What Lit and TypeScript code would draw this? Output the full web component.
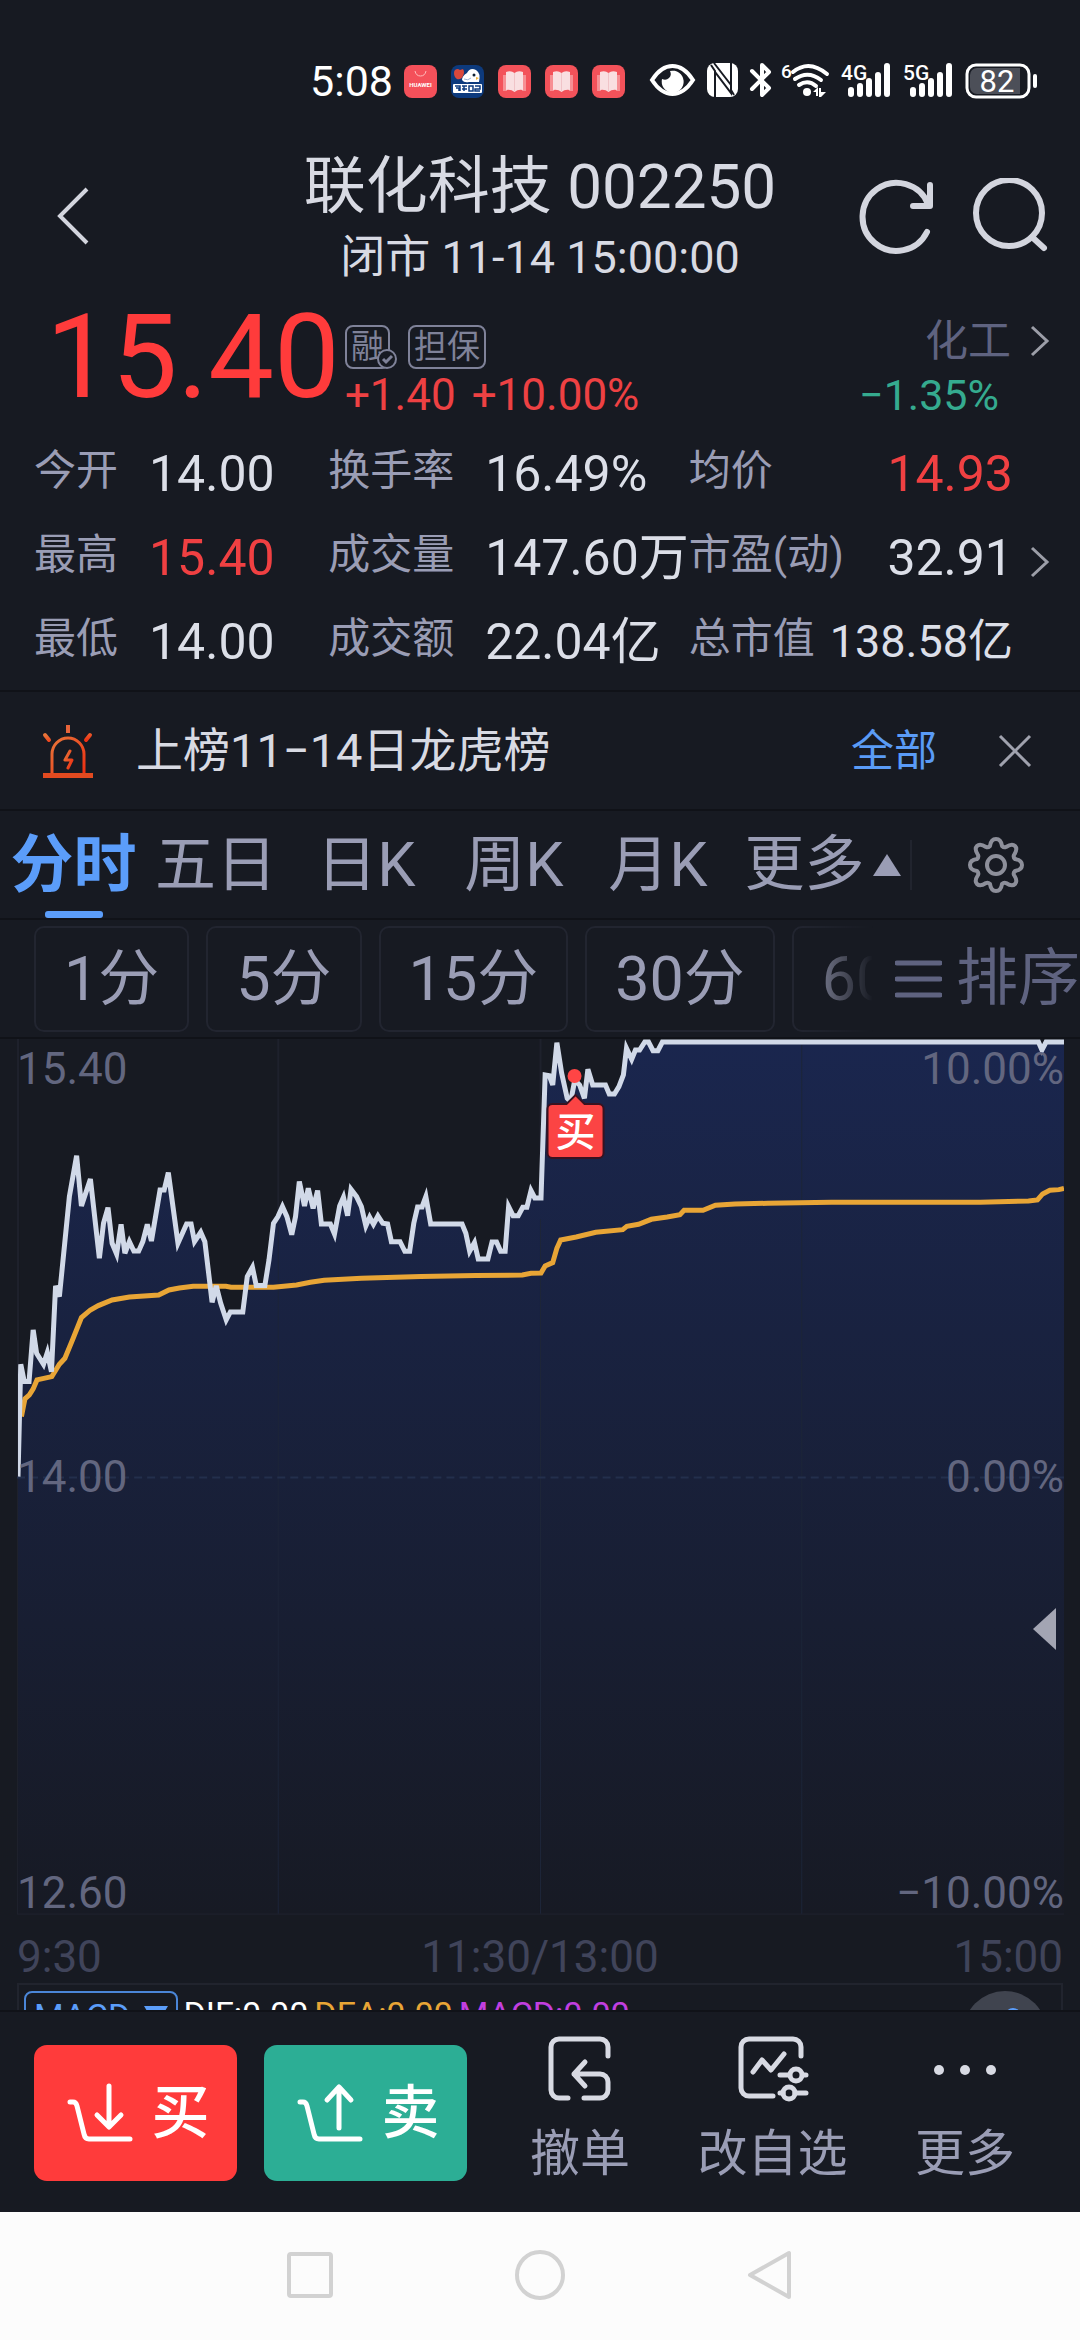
import { LitElement, html, css } from "lit";
import { customElement, state } from "lit/decorators.js";

interface Stat {
  label: string;
  value: string;
  tone?: "up" | "small";
}

const STATS: Stat[] = [
  { label: "今开", value: "14.00" },
  { label: "换手率", value: "16.49%" },
  { label: "均价", value: "14.93", tone: "up" },
  { label: "最高", value: "15.40", tone: "up" },
  { label: "成交量", value: "147.60万" },
  { label: "市盈(动)", value: "32.91" },
  { label: "最低", value: "14.00" },
  { label: "成交额", value: "22.04亿" },
  { label: "总市值", value: "138.58亿", tone: "small" },
];

const PERIODS = ["分时", "五日", "日K", "周K", "月K"];
const MINUTES = ["1分", "5分", "15分", "30分", "60分"];

/* Session samples: x grows with trading time, y falls with price (93 units = 0.10). */
const PRICE =
  "52,1340 60,1003 70,1055 84,1055 96,900 106,970 126,1003 137,968 149,1025 161,768 172,800 201,500 222,377 236,528 262,447 288,685 300,580 313,533 325,640 338,672 351,583 362,670 375,635 388,663 402,663 414,635 427,583 439,633 464,480 476,480 488,428 516,640 541,582 554,582 564,635 582,607 594,635 615,817 627,768 640,820 656,870 668,846 704,846 717,740 732,712 743,767 768,767 780,690 793,580 806,560 819,530 832,560 846,614 857,560 868,455 883,528 894,475 908,535 921,482 932,582 958,582 970,612 985,528 996,502 1008,557 1018,478 1034,500 1048,530 1061,588 1072,562 1083,583 1096,558 1110,580 1124,582 1135,635 1160,635 1174,664 1188,664 1200,580 1211,531 1224,531 1235,500 1249,582 1340,582 1351,610 1362,664 1376,638 1387,687 1415,687 1427,636 1440,636 1452,664 1465,664 1475,530 1488,557 1503,557 1516,532 1528,532 1540,482 1551,504 1569,504 1581,135 1593,137 1603,165 1615,38 1629,130 1645,205 1655,215 1667,150 1681,165 1695,205 1705,118 1719,165 1756,165 1767,192 1782,192 1795,170 1808,135 1817,55 1832,88 1843,60 1855,60 1870,36 1881,36 1894,62 1908,62 1921,36 3012,36 3022,60 3034,36 3086,36";
const AVERAGE =
  "62,1160 72,1107 85,1095 96,1077 107,1050 150,1040 172,1003 188,985 212,925 236,863 262,840 285,827 325,810 375,801 460,795 490,780 520,774 560,769 655,769 670,772 793,772 860,765 900,757 940,751 1048,745 1220,740 1380,737 1515,735 1540,730 1569,729 1581,708 1603,698 1615,655 1626,630 1671,621 1728,607 1806,599 1818,589 1852,583 1889,568 1935,561 1972,554 1984,541 2039,541 2075,526 2132,522 2226,520 2412,517 2843,517 2983,513 3009,510 3024,492 3045,481 3071,479 3086,475";

const fontStack = css`"Roboto", "Noto Sans CJK SC", sans-serif`;

const reset = css`
  * {
    box-sizing: border-box;
  }
  button {
    font: inherit;
    color: inherit;
    background: none;
    border: 0;
    padding: 0;
    margin: 0;
    cursor: pointer;
    white-space: nowrap;
  }
  svg {
    display: block;
    flex: none;
  }
`;

@customElement("status-bar")
class StatusBar extends LitElement {
  static styles = [
    reset,
    css`
      :host {
        display: block;
        color: #fff;
      }
      svg {
        overflow: visible;
      }
      .bar {
        display: flex;
        align-items: center;
        justify-content: flex-end;
        height: 108px;
        padding: 54px 42px 0 0;
      }
      .time {
        font-size: 43px;
        line-height: 54px;
        margin-right: 11px;
      }
      .apps {
        display: flex;
        gap: 14px;
        margin-right: 25px;
      }
      .system {
        display: flex;
        gap: 12px;
      }
      .wifi {
        margin-left: -3px;
      }
    `,
  ];

  private book() {
    return html`<svg width="33" height="33" viewBox="0 0 33 33">
      <rect width="33" height="33" rx="8" fill="#f3525a" />
      <path d="M5 10h4v16H5zM24 10h4v16h-4z" fill="#f78f94" />
      <path d="M8 7q5-2 8.500 1q3.500-3 8.500-1v18q-5-1-8.500 2q-3.500-3-8.500-2z" fill="#f9dfe1" />
      <path d="M16.500 8v18" stroke="#f0c4c8" />
    </svg>`;
  }

  private signal(label: string) {
    return html`<svg width="50" height="34" viewBox="0 0 50 34">
      <text x="0" y="17" font-size="21" font-weight="500" fill="#fff">${label}</text>
      <path
        d="M10 27v4M19 23v8M28 18v13M37 12v19M46 3v28"
        stroke="#fff"
        stroke-width="6"
        stroke-linecap="round"
      />
    </svg>`;
  }

  render() {
    return html`<div class="bar">
      <span class="time">5:08</span>
      <span class="apps">
        <svg width="33" height="33" viewBox="0 0 33 33">
          <rect width="33" height="33" rx="8" fill="#f4505a" />
          <path d="M11 6q1 5 5.500 5T22 6" fill="none" stroke="#fbb" />
          <text x="16.500" y="22" font-size="6" font-weight="700" fill="#fff" text-anchor="middle">HUAWEI</text>
        </svg>
        <svg width="33" height="33" viewBox="0 0 33 33">
          <rect width="33" height="33" rx="8" fill="#0d3a7d" />
          <path d="M11 15q0-4 5-7q3-6 9-3q5 3 3 12H18q-5 1-7-2z" fill="#fff" />
          <path d="M13 14q4 2 7-1" fill="none" stroke="#9fb6d6" />
          <path d="M3 8q0-4 4-4l2 1 3-1q2 3 0 7-2 4-6 3-3-2-3-6z" fill="#d9483c" />
          <circle cx="23" cy="10" r="1.500" fill="#123" />
          <path d="M25 12l3 1-3 2z" fill="#f3b53a" />
          <rect x="2" y="19" width="29" height="9" rx="1" fill="#fff" />
          <path
            d="M4 21h5v5M5 23h3v3M11 21h5M13 21v5M11 24h5M18 21h4v5h-4zM24 21h5v3h-5v2h5"
            fill="none"
            stroke="#0d3a7d"
            stroke-width="1.500"
          />
        </svg>
        ${this.book()} ${this.book()} ${this.book()}
      </span>
      <span class="system">
        <svg width="45" height="34" viewBox="0 0 45 34">
          <path d="M2 17Q11 3 22.500 3T43 17Q34 31 22.500 31T2 17z" fill="none" stroke="#fff" stroke-width="4" />
          <path d="M20 8a11 11 0 1 1-8 8q4 2 7-1t1-7z" fill="#fff" />
        </svg>
        <svg width="31" height="34" viewBox="0 0 31 34">
          <rect width="31" height="34" rx="8" fill="#fff" />
          <path d="M8 34V9l16 21V6M7 0l17 22" fill="none" stroke="#171a22" stroke-width="2" />
          <path d="M4 2l4 6v26M27 32l-3-5V0" fill="none" stroke="#171a22" stroke-width="2" />
        </svg>
        <svg width="22" height="34" viewBox="0 0 22 34">
          <path d="M2 8l17 17-7 7V2l7 7L2 26" fill="none" stroke="#fff" stroke-width="4" stroke-linejoin="round" stroke-linecap="round" />
        </svg>
        <svg class="wifi" width="48" height="34" viewBox="0 0 48 34">
          <text x="0" y="15" font-size="19" font-weight="500" fill="#fff">6</text>
          <path d="M12 9q16-13 34 2M14 16q13-9 26 1M18 22q9-6 17 1" fill="none" stroke="#fff" stroke-width="4" stroke-linecap="round" />
          <circle cx="26" cy="29" r="4" fill="#fff" />
          <path d="M32 29l5-5v9h-2v-4zM38 25h2v4h5l-5 5h-2z" fill="#fff" />
        </svg>
        ${this.signal("4G")} ${this.signal("5G")}
        <svg width="73" height="36" viewBox="0 0 73 36">
          <rect x="2" y="2" width="62" height="32" rx="9" fill="none" stroke="#fff" stroke-width="3" />
          <path d="M12 5h43v26H12a7 7 0 0 1-7-7V12a7 7 0 0 1 7-7z" fill="#4c4f58" />
          <path d="M70 13v10" stroke="#fff" stroke-width="4" stroke-linecap="round" />
          <text x="32" y="29" font-size="31" fill="#fff" text-anchor="middle">82</text>
        </svg>
      </span>
    </div>`;
  }
}

@customElement("quote-panel")
class QuotePanel extends LitElement {
  static styles = [
    reset,
    css`
      :host {
        display: block;
        border-bottom: 2px solid #101218;
      }
      .head {
        display: grid;
        grid-template-columns: 1fr auto 1fr;
        align-items: center;
        padding: 43px 32px 0;
      }
      .back {
        justify-self: start;
        padding: 0 0 5px 24px;
      }
      .title {
        margin: 0;
        text-align: center;
        color: #d8dae3;
        font-weight: 400;
      }
      .name {
        display: block;
        font-size: 62px;
        line-height: 72px;
      }
      .session {
        display: block;
        margin-top: 7px;
        font-size: 45px;
        line-height: 56px;
      }
      .actions {
        display: flex;
        justify-content: flex-end;
        gap: 38px;
        padding-bottom: 5px;
      }
      .quote {
        display: flex;
        align-items: flex-start;
        padding: 12px 30px 0 46px;
      }
      .price {
        font-size: 117px;
        line-height: 118px;
        color: #ff3b3b;
      }
      .info {
        margin-left: 5px;
        padding-top: 27px;
      }
      .tags {
        display: flex;
        gap: 18px;
        color: #7f8299;
      }
      .tag {
        position: relative;
        height: 44px;
        min-width: 44px;
        padding: 0 4px;
        border: 2px solid #7f8299;
        border-radius: 8px;
        font-size: 33px;
        line-height: 40px;
      }
      .check {
        position: absolute;
        right: -10px;
        bottom: -3px;
      }
      .change {
        display: flex;
        gap: 16px;
        font-size: 44px;
        line-height: 52px;
        color: #ee4143;
      }
      .sector {
        display: grid;
        grid-template-columns: auto auto;
        align-items: center;
        justify-items: end;
        column-gap: 19px;
        margin-left: auto;
        padding-top: 16px;
        font-size: 43px;
        line-height: 54px;
        color: #5f6380;
      }
      .down {
        padding-right: 12px;
        font-size: 43px;
        line-height: 54px;
        color: #35ab8f;
      }
      .stats {
        display: grid;
        grid-template-columns: 294fr 358fr 324fr 37fr;
        margin: 0;
        padding: 10px 30px 6px 34px;
      }
      .stat {
        display: flex;
        align-items: flex-start;
        height: 84px;
        padding-top: 11px;
        white-space: nowrap;
      }
      .stat dt {
        width: 115px;
        font-size: 42px;
        line-height: 56px;
        color: #9a9db5;
      }
      .stat dd {
        margin: 0;
        font-size: 50px;
        line-height: 62px;
        color: #dcdfe8;
      }
      .stat:nth-of-type(3n + 2) dt {
        width: 157px;
      }
      .stat:nth-of-type(3n) {
        justify-content: space-between;
      }
      .stat:nth-of-type(3n) dt {
        width: auto;
      }
      .stat:nth-of-type(3n + 1) {
        grid-column: 1;
      }
      .stat dd.up {
        color: #f04042;
      }
      .stat dd.small {
        font-size: 45px;
      }
      .more {
        grid-column: 4;
        grid-row: 2;
        display: flex;
        align-items: center;
        justify-content: flex-end;
        height: 84px;
        padding-top: 8px;
      }
    `,
  ];

  private arrow() {
    return html`<svg width="20" height="32" viewBox="0 0 20 32">
      <path d="M2 2l15 14L2 30" fill="none" stroke="#9c9ea8" stroke-width="3" />
    </svg>`;
  }

  render() {
    return html`
      <header class="head">
        <button class="back" aria-label="返回">
          <svg width="34" height="58" viewBox="0 0 34 58">
            <path d="M31 2L4 29l27 27" fill="none" stroke="#d3d5de" stroke-width="4" />
          </svg>
        </button>
        <h1 class="title">
          <span class="name">联化科技 002250</span>
          <span class="session">闭市 11-14 15:00:00</span>
        </h1>
        <div class="actions">
          <button aria-label="刷新">
            <svg width="76" height="76" viewBox="0 0 76 76">
              <path d="M69 54A34 34 0 1 1 70 26" fill="none" stroke="#d3d5de" stroke-width="6" stroke-linecap="round" />
              <path d="M72 7v21H55" fill="none" stroke="#d3d5de" stroke-width="6" stroke-linejoin="round" stroke-linecap="round" />
            </svg>
          </button>
          <button aria-label="搜索">
            <svg width="76" height="76" viewBox="0 0 76 76">
              <circle cx="37" cy="35" r="33" fill="none" stroke="#d3d5de" stroke-width="6" />
              <path d="M60 59l12 11" stroke="#d3d5de" stroke-width="6" stroke-linecap="round" />
            </svg>
          </button>
        </div>
      </header>
      <div class="quote">
        <div class="price">15.40</div>
        <div class="info">
          <div class="tags">
            <span class="tag"
              >融<svg class="check" width="22" height="22" viewBox="0 0 22 22">
                <circle cx="11" cy="11" r="9" fill="#171a22" stroke="#7f8299" stroke-width="2" />
                <path d="M7 11l3 3 6-6" fill="none" stroke="#7f8299" stroke-width="3" /></svg
            ></span>
            <span class="tag">担保</span>
          </div>
          <div class="change"><span>+1.40</span><span>+10.00%</span></div>
        </div>
        <div class="sector">
          <span>化工</span>
          <button aria-label="行业">${this.arrow()}</button>
          <span class="down">−1.35%</span>
        </div>
      </div>
      <dl class="stats">
        ${STATS.map(
          (s) => html`<div class="stat">
            <dt>${s.label}</dt>
            <dd class=${s.tone ?? ""}>${s.value}</dd>
          </div>`
        )}
        <button class="more" aria-label="更多指标">${this.arrow()}</button>
      </dl>
    `;
  }
}

@customElement("notice-bar")
class NoticeBar extends LitElement {
  static styles = [
    reset,
    css`
      :host {
        display: block;
        border-bottom: 2px solid #101218;
      }
      .bar {
        display: flex;
        align-items: center;
        height: 117px;
        padding: 0 47px 0 40px;
        line-height: 60px;
      }
      .text {
        margin-left: 42px;
        font-size: 47px;
        color: #d8dae3;
      }
      .all {
        margin-left: auto;
        margin-right: 60px;
        font-size: 43px;
        color: #5a9bf6;
        text-decoration: none;
      }
    `,
  ];

  render() {
    return html`<div class="bar">
      <svg width="54" height="54" viewBox="0 0 54 54">
        <defs>
          <linearGradient id="lamp" x1="0" y1="0" x2="1" y2="1">
            <stop offset="0" stop-color="#e8763a" />
            <stop offset="1" stop-color="#ee2f12" />
          </linearGradient>
        </defs>
        <g fill="none" stroke="url(#lamp)" stroke-width="4" stroke-linecap="round">
          <path d="M12 50V30a16 16 0 0 1 32 0v20" stroke-width="3" />
          <path d="M5 11l4 5M50 11l-4 5" />
          <path d="M30 27l-5 9h7l-4 8" stroke-width="3" stroke-linejoin="round" />
        </g>
        <path d="M26 1h4v8h-4z" fill="#e8643a" />
        <path d="M3 49h50v5H3z" fill="#e24a20" />
      </svg>
      <span class="text">上榜11−14日龙虎榜</span>
      <a class="all" href="#all">全部</a>
      <button aria-label="关闭">
        <svg width="36" height="36" viewBox="0 0 36 36">
          <path d="M3 3l30 30M33 3L3 33" stroke="#a0a2ae" stroke-width="3" />
        </svg>
      </button>
    </div>`;
  }
}

@customElement("period-tabs")
class PeriodTabs extends LitElement {
  @state() private active = "分时";

  static styles = [
    reset,
    css`
      :host {
        display: block;
        color: #9a9db5;
      }
      .periods {
        display: grid;
        grid-template-columns: 147fr 138fr 162fr 134fr 154fr 175fr 170fr;
        height: 109px;
        border-bottom: 2px solid #101218;
      }
      .period {
        position: relative;
        font-size: 61px;
        line-height: 100px;
      }
      .period.active {
        font-size: 63px;
        font-weight: 700;
        color: #5b9dfa;
      }
      .period.active::after {
        content: "";
        position: absolute;
        left: calc(50% - 29px);
        bottom: 0;
        width: 58px;
        height: 7px;
        border-radius: 3px;
        background: #5b9dfa;
      }
      .expand {
        display: flex;
        align-items: center;
        justify-content: center;
        gap: 8px;
        font-size: 60px;
        line-height: 100px;
      }
      .settings {
        display: flex;
        align-items: center;
        justify-content: center;
        height: 50px;
        margin-top: 29px;
        border-left: 2px solid #21242e;
      }
      .minutes {
        display: flex;
        align-items: center;
        height: 119px;
        border-bottom: 2px solid #101218;
        line-height: 72px;
      }
      .scroller {
        display: flex;
        gap: 17px;
        flex: 1;
        min-width: 0;
        overflow: hidden;
        padding-left: 34px;
        -webkit-mask-image: linear-gradient(to right, #000 calc(100% - 80px), transparent calc(100% - 4px));
        mask-image: linear-gradient(to right, #000 calc(100% - 80px), transparent calc(100% - 4px));
      }
      .minute {
        flex: none;
        height: 106px;
        padding: 0 28px;
        border: 2px solid #222530;
        border-radius: 10px;
        font-size: 61px;
      }
      .sort {
        display: flex;
        align-items: center;
        gap: 14px;
        margin-left: 18px;
        font-size: 62px;
        color: #5f6380;
      }
    `,
  ];

  render() {
    return html`
      <nav class="periods">
        ${PERIODS.map(
          (p) => html`<button
            class=${p === this.active ? "period active" : "period"}
            @click=${() => (this.active = p)}
          >
            ${p}
          </button>`
        )}
        <button class="expand">
          更多<svg width="28" height="22" viewBox="0 0 28 22"><path d="M14 0l14 22H0z" fill="#9a9db5" /></svg>
        </button>
        <button class="settings" aria-label="设置">
          <svg width="58" height="58" viewBox="0 0 58 58">
            <g fill="none" stroke="#8d8f9a" stroke-width="4" stroke-linejoin="round">
              <path
                d="M29 3q5 0 6 7 2 2 4 1 6-4 9-1t-1 9q-1 2 1 4 7 1 7 6t-7 6q-2 2-1 4 4 6 1 9t-9-1q-2-1-4 1-1 7-6 7t-6-7q-2-2-4-1-6 4-9 1t1-9q1-2-1-4-7-1-7-6t7-6q2-2 1-4-4-6-1-9t9 1q2 1 4-1 1-7 6-7z"
              />
              <circle cx="29" cy="29" r="9" />
            </g>
          </svg>
        </button>
      </nav>
      <div class="minutes">
        <div class="scroller">${MINUTES.map((m) => html`<button class="minute">${m}</button>`)}</div>
        <button class="sort">
          <svg width="47" height="40" viewBox="0 0 47 40">
            <path d="M2 4h43M2 20h43M2 36h43" stroke="#5f6380" stroke-width="5" stroke-linecap="round" />
          </svg>
          排序
        </button>
      </div>
    `;
  }
}

@customElement("intraday-chart")
class IntradayChart extends LitElement {
  static styles = [
    reset,
    css`
      :host {
        display: block;
        font-size: 44px;
        line-height: 52px;
      }
      .plot {
        position: relative;
        margin: 0 16px 0 17px;
        color: #62667f;
      }
      .plot > svg {
        width: 100%;
        height: auto;
      }
      .scale {
        position: absolute;
        inset: 4px 0 -4px 0;
        display: flex;
        flex-direction: column;
        justify-content: space-between;
      }
      .level {
        display: flex;
        justify-content: space-between;
      }
      .level:nth-child(2) {
        margin-bottom: 8px;
      }
      .drawer {
        position: absolute;
        right: 7px;
        top: 65%;
      }
      .times {
        display: grid;
        grid-template-columns: 1fr auto 1fr;
        padding: 16px 17px 0;
        color: #40445a;
      }
      .times span:last-child {
        text-align: right;
      }
      .macd {
        display: flex;
        align-items: flex-start;
        height: 27px;
        margin: 0 17px;
        padding: 6px 14px 0 5px;
        border: 2px solid #21242e;
        border-bottom: 0;
        overflow: hidden;
        font-size: 34px;
        line-height: 46px;
      }
      .pick {
        display: flex;
        align-items: center;
        gap: 14px;
        margin-right: 5px;
        padding: 0 8px;
        border: 2px solid #4b86d8;
        border-radius: 8px;
        color: #5b9dfa;
      }
      .dif {
        color: #fff;
      }
      .dea {
        margin: 0 6px;
        color: #e8a536;
      }
      .bar {
        color: #c23fe0;
      }
      .float {
        margin-left: auto;
      }
    `,
  ];

  render() {
    return html`
      <div class="plot">
        <svg viewBox="0 0 1046 875" role="img" aria-label="分时走势">
          <defs>
            <linearGradient id="area" x1="0" y1="0" x2="0" y2="1">
              <stop offset="0" stop-color="#1a264e" />
              <stop offset="1" stop-color="#171a24" />
            </linearGradient>
          </defs>
          <g stroke="#1e212c" stroke-width="2">
            <path d="M1 0v875M261 0v875M523 0v875M784 0v875M1045 0v875M0 874h1046" />
          </g>
          <svg x="1" y="0" width="1045" height="874" viewBox="52 27 3034 2625" preserveAspectRatio="none">
            <polygon points="${PRICE} 3086,2652 52,2652" fill="url(#area)" />
          </svg>
          <g stroke="#1d2538" stroke-width="1">
            <path d="M261 180v694M523 180v694M784 6v868" />
            <path d="M0 438h1046" stroke="#232f4c" stroke-dasharray="8 5" stroke-width="2" />
          </g>
          <svg x="1" y="0" width="1045" height="874" viewBox="52 27 3034 2625" preserveAspectRatio="none">
            <g fill="none">
              <polyline points=${AVERAGE} stroke="#e8a536" stroke-width="5" vector-effect="non-scaling-stroke" />
              <polyline points=${PRICE} stroke="#d1d9e8" stroke-width="5" vector-effect="non-scaling-stroke" />
            </g>
          </svg>
          <circle cx="557" cy="37" r="7" fill="#ff4545" />
          <path
            d="M535 65h14l9-9 9 9h14a5 5 0 0 1 5 5v44a5 5 0 0 1-5 5h-46a5 5 0 0 1-5-5V70a5 5 0 0 1 5-5z"
            fill="#fb4444"
            stroke="#3a1220"
            stroke-width="2"
          />
          <text x="558" y="107" font-size="40" font-weight="500" fill="#fff" text-anchor="middle">买</text>
        </svg>
        <div class="scale">
          <div class="level"><span>15.40</span><span>10.00%</span></div>
          <div class="level"><span>14.00</span><span>0.00%</span></div>
          <div class="level"><span>12.60</span><span>−10.00%</span></div>
        </div>
        <button class="drawer" aria-label="展开侧栏">
          <svg width="24" height="42" viewBox="0 0 24 42"><path d="M23 0v42L0 21z" fill="#a3a5b3" /></svg>
        </button>
      </div>
      <div class="times"><span>9:30</span><span>11:30/13:00</span><span>15:00</span></div>
      <div class="macd">
        <button class="pick">
          MACD<svg width="24" height="20" viewBox="0 0 24 20"><path d="M0 0h24L12 20z" fill="#5b9dfa" /></svg>
        </button>
        <span class="dif">DIF:0.00</span><span class="dea">DEA:0.00</span><span class="bar">MACD:0.00</span>
        <svg class="float" width="84" height="84" viewBox="0 0 84 84">
          <circle cx="42" cy="42" r="42" fill="#40444f" />
          <circle cx="50" cy="25" r="8" fill="#5b9dfa" />
        </svg>
      </div>
    `;
  }
}

@customElement("trade-bar")
class TradeBar extends LitElement {
  static styles = [
    reset,
    css`
      :host {
        display: block;
        border-top: 2px solid #101218;
      }
      .bar {
        display: flex;
        align-items: flex-start;
        height: 200px;
        padding: 22px 30px 0 34px;
      }
      .trade {
        display: flex;
        align-items: center;
        justify-content: center;
        gap: 18px;
        width: 203px;
        height: 136px;
        margin: 11px 27px 0 0;
        padding-left: 6px;
        border-radius: 13px;
        font-size: 58px;
        font-weight: 500;
        line-height: 72px;
        color: #fff;
      }
      .buy {
        background: #ff3b3b;
      }
      .sell {
        background: #2cae95;
      }
      .links {
        flex: 1;
        display: grid;
        grid-template-columns: 170fr 215fr 170fr;
        margin-left: 1px;
      }
      .link {
        display: flex;
        flex-direction: column;
        align-items: center;
        gap: 18px;
        font-size: 50px;
        line-height: 64px;
        color: #9a9db5;
      }
    `,
  ];

  private cart(arrow: string) {
    return html`<svg width="66" height="62" viewBox="0 0 66 62">
      <path
        d="M3 20h3q3 0 4 4l7 28q1 5 5 5h41"
        fill="none"
        stroke="#fff"
        stroke-width="5"
        stroke-linecap="round"
        stroke-linejoin="round"
      />
      <path d=${arrow} fill="none" stroke="#fff" stroke-width="5" stroke-linecap="round" stroke-linejoin="round" />
    </svg>`;
  }

  render() {
    return html`<div class="bar">
      <button class="trade buy">${this.cart("M42 4v40M30 33l12 12 12-12")}买</button>
      <button class="trade sell">${this.cart("M42 46V6M30 18L42 5l12 13")}卖</button>
      <div class="links">
        <button class="link">
          <svg width="68" height="70" viewBox="0 0 68 70">
            <g fill="none" stroke="#d8dae3" stroke-width="5" stroke-linecap="round" stroke-linejoin="round">
              <path d="M22 64H13a8 8 0 0 1-8-8V13a8 8 0 0 1 8-8h41a8 8 0 0 1 8 8v9" />
              <path d="M39 28L28 40l11 12M28 40h26a8 8 0 0 1 8 8v8a8 8 0 0 1-8 8H38" />
            </g>
          </svg>
          撤单
        </button>
        <button class="link">
          <svg width="76" height="70" viewBox="0 0 76 70">
            <g fill="none" stroke="#d8dae3" stroke-width="5" stroke-linecap="round" stroke-linejoin="round">
              <path d="M38 62H14a8 8 0 0 1-8-8V13a8 8 0 0 1 8-8h44a8 8 0 0 1 8 8v9" />
              <path d="M18 38l9-12 9 10 13-16" />
              <path d="M45 41h9M69 41h2M45 59h3M60 59h11" />
              <circle cx="61" cy="41" r="6" />
              <circle cx="54" cy="59" r="6" />
            </g>
          </svg>
          改自选
        </button>
        <button class="link">
          <svg width="70" height="70" viewBox="0 0 70 70">
            <g fill="#d8dae3">
              <circle cx="9" cy="36" r="5" />
              <circle cx="35" cy="36" r="5" />
              <circle cx="61" cy="36" r="5" />
            </g>
          </svg>
          更多
        </button>
      </div>
    </div>`;
  }
}

@customElement("system-nav")
class SystemNav extends LitElement {
  static styles = [
    reset,
    css`
      :host {
        display: block;
        flex: 1;
        background: #fcfcfc;
      }
      .nav {
        display: flex;
        justify-content: center;
        align-items: center;
        gap: 180px;
        height: 127px;
      }
    `,
  ];

  render() {
    return html`<nav class="nav">
      <button aria-label="最近任务">
        <svg width="50" height="50" viewBox="0 0 50 50">
          <rect x="4" y="4" width="42" height="42" rx="2" fill="none" stroke="#d2d2d2" stroke-width="4" />
        </svg>
      </button>
      <button aria-label="主页">
        <svg width="50" height="50" viewBox="0 0 50 50">
          <circle cx="25" cy="25" r="23" fill="none" stroke="#d2d2d2" stroke-width="4" />
        </svg>
      </button>
      <button aria-label="后退">
        <svg width="50" height="50" viewBox="0 0 50 50">
          <path d="M44 3v44L5 25z" fill="none" stroke="#d2d2d2" stroke-width="4" stroke-linejoin="round" />
        </svg>
      </button>
    </nav>`;
  }
}

@customElement("app-root")
class AppRoot extends LitElement {
  static styles = css`
    :host {
      display: flex;
      flex-direction: column;
      min-height: 100vh;
      overflow: hidden;
      background: #171a22;
      font-family: ${fontStack};
      font-size: 42px;
    }
  `;

  render() {
    return html`
      <status-bar></status-bar>
      <quote-panel></quote-panel>
      <notice-bar></notice-bar>
      <period-tabs></period-tabs>
      <intraday-chart></intraday-chart>
      <trade-bar></trade-bar>
      <system-nav></system-nav>
    `;
  }
}
